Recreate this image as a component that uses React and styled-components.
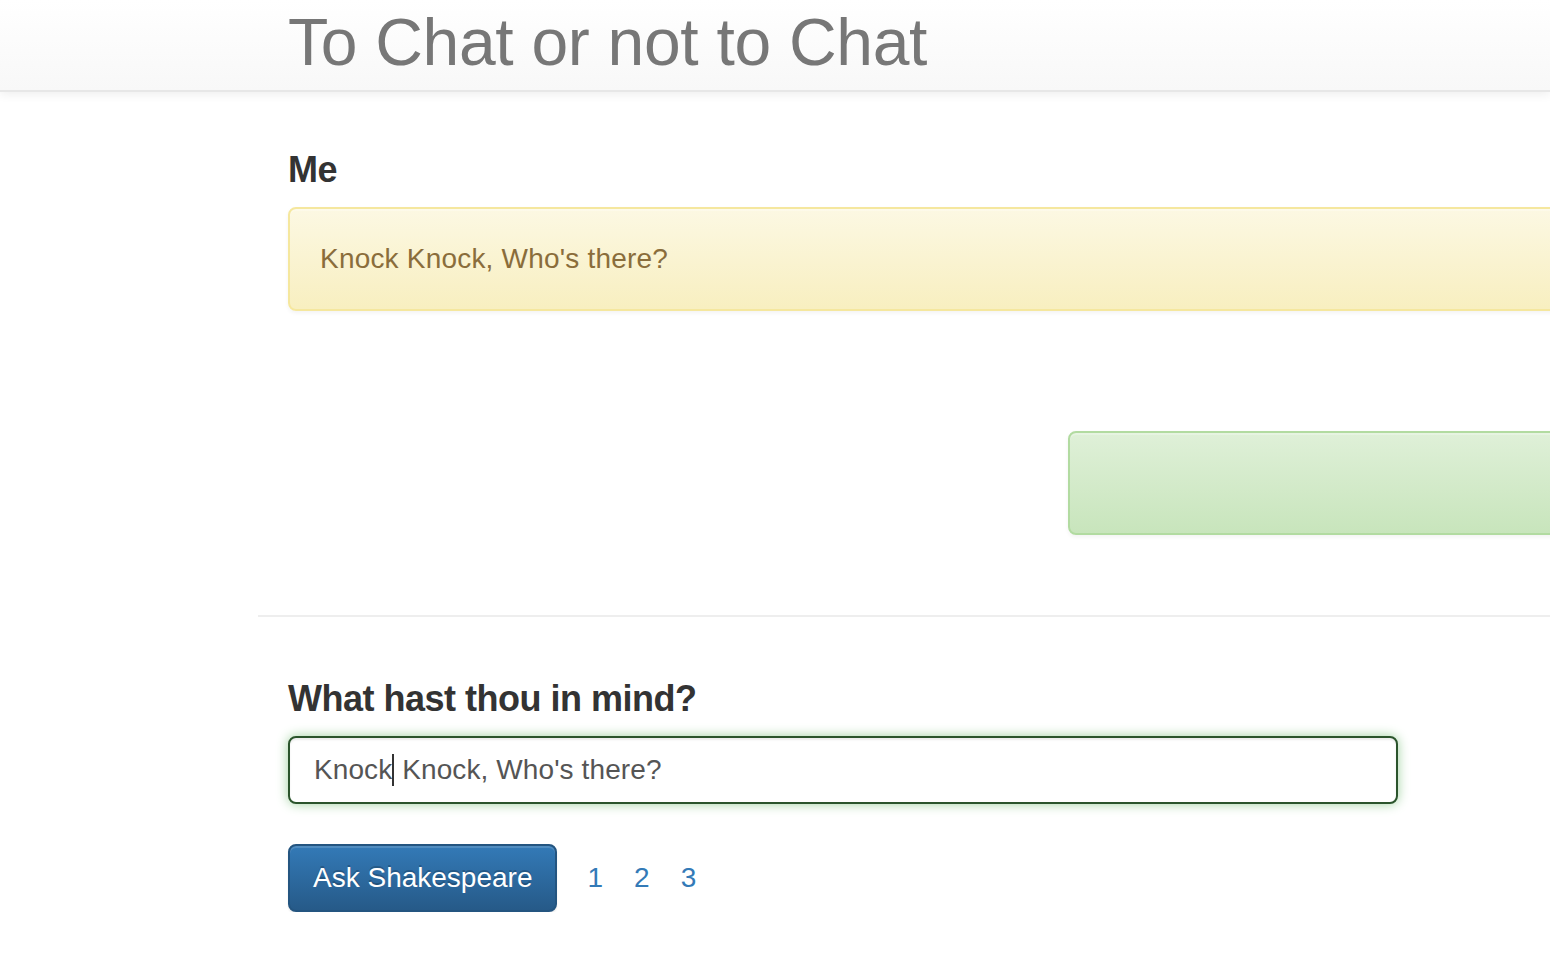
import React from 'react';
import styled, { createGlobalStyle } from 'styled-components';

const GlobalStyle = createGlobalStyle`
  html, body {
    margin: 0;
    padding: 0;
    overflow-x: hidden;
    background: #fff;
  }
  body {
    font-family: "Liberation Sans", Arial, Helvetica, sans-serif;
    font-size: 28px;
    line-height: 40px;
    color: #333;
  }
  * {
    box-sizing: border-box;
  }
`;

const pages = ['1', '2', '3'];

const App = () => {
  return (
    <>
      <GlobalStyle />
      <Navbar>
        <Container>
          <Brand href="#">To Chat or not to Chat</Brand>
        </Container>
      </Navbar>
      <Container>
        <Row>
          <Col span={8}>
            <Heading>Me</Heading>
            <Alert variant="warning">Knock Knock, Who's there?</Alert>
          </Col>
          <Col span={8} offset={4}>
            <ReplySpacer />
            <Alert variant="success" />
          </Col>
        </Row>
        <Divider />
        <Row>
          <Col span={6}>
            <Heading>What hast thou in mind?</Heading>
            <Field role="textbox" aria-label="message">
              Knock<Caret /> Knock, Who's there?
            </Field>
            <Actions>
              <AskButton type="button">Ask Shakespeare</AskButton>
              <PageLinks>
                {pages.map((page) => (
                  <PageLink key={page} href="#">
                    {page}
                  </PageLink>
                ))}
              </PageLinks>
            </Actions>
          </Col>
        </Row>
      </Container>
    </>
  );
};

export default App;

const Navbar = styled.nav`
  width: 100%;
  height: 92px;
  margin-bottom: 38px;
  background-image: linear-gradient(to bottom, #ffffff 0%, #f8f8f8 100%);
  border-bottom: 2px solid #e7e7e7;
  box-shadow: inset 0 2px 0 rgba(255, 255, 255, 0.15),
    0 2px 10px rgba(0, 0, 0, 0.075);
  overflow: hidden;
`;

const Container = styled.div`
  width: 2340px;
  margin-left: 258px;
  padding: 0 30px;
`;

const Brand = styled.a`
  display: block;
  height: 90px;
  font-size: 66px;
  line-height: 84px;
  color: #777;
  text-decoration: none;
  letter-spacing: -0.3px;
`;

const Row = styled.div`
  display: grid;
  grid-template-columns: repeat(12, 1fr);
  margin: 0 -30px;
`;

const Col = styled.div`
  grid-column: ${({ span, offset = 0 }) => `${offset + 1} / span ${span}`};
  padding: 0 30px;
`;

const Heading = styled.h4`
  margin: 20px 0 18px;
  font-size: 36px;
  line-height: 39px;
  font-weight: bold;
  letter-spacing: -0.5px;
  color: #333;
`;

const alertColors = {
  warning: {
    from: '#fcf8e3',
    to: '#f8efc0',
    border: '#f5e79e',
    text: '#8a6d3b',
  },
  success: {
    from: '#dff0d8',
    to: '#c8e5bc',
    border: '#b2dba1',
    text: '#3c763d',
  },
};

const Alert = styled.div`
  min-height: 104px;
  padding: 30px;
  margin-bottom: 40px;
  border: 2px solid ${({ variant }) => alertColors[variant].border};
  border-radius: 8px;
  background-image: linear-gradient(
    to bottom,
    ${({ variant }) => alertColors[variant].from} 0%,
    ${({ variant }) => alertColors[variant].to} 100%
  );
  color: ${({ variant }) => alertColors[variant].text};
  box-shadow: inset 0 2px 0 rgba(255, 255, 255, 0.25),
    0 2px 4px rgba(0, 0, 0, 0.05);
  font-size: 28px;
  line-height: 40px;
  letter-spacing: 0.2px;
`;

const ReplySpacer = styled.div`
  height: 80px;
`;

const Divider = styled.hr`
  margin: 40px -30px 42px;
  border: 0;
  border-top: 2px solid #eee;
`;

const Field = styled.div`
  display: flex;
  align-items: center;
  height: 68px;
  padding: 12px 24px;
  border: 2px solid #2b542c;
  border-radius: 8px;
  background: #fff;
  color: #555;
  font-size: 28px;
  line-height: 40px;
  letter-spacing: 0.1px;
  white-space: pre;
  box-shadow: inset 0 2px 2px rgba(0, 0, 0, 0.075), 0 0 12px #9fd19f;
`;

const Caret = styled.span`
  display: inline-block;
  width: 2px;
  height: 32px;
  background: #333;
`;

const Actions = styled.div`
  display: flex;
  align-items: center;
  margin-top: 40px;
  gap: 30px;
`;

const AskButton = styled.button`
  height: 68px;
  padding: 12px 23px;
  border: 2px solid #245580;
  border-radius: 8px;
  background-image: linear-gradient(to bottom, #337ab7 0%, #265a88 100%);
  color: #fff;
  font-family: "Liberation Sans", Arial, Helvetica, sans-serif;
  font-size: 28px;
  line-height: 40px;
  text-shadow: 0 -2px 0 rgba(0, 0, 0, 0.2);
  box-shadow: inset 0 2px 0 rgba(255, 255, 255, 0.15),
    0 2px 2px rgba(0, 0, 0, 0.075);
  cursor: pointer;
`;

const PageLinks = styled.div`
  display: flex;
  gap: 31px;
`;

const PageLink = styled.a`
  color: #337ab7;
  font-size: 28px;
  text-decoration: none;

  &:hover {
    color: #23527c;
    text-decoration: underline;
  }
`;
